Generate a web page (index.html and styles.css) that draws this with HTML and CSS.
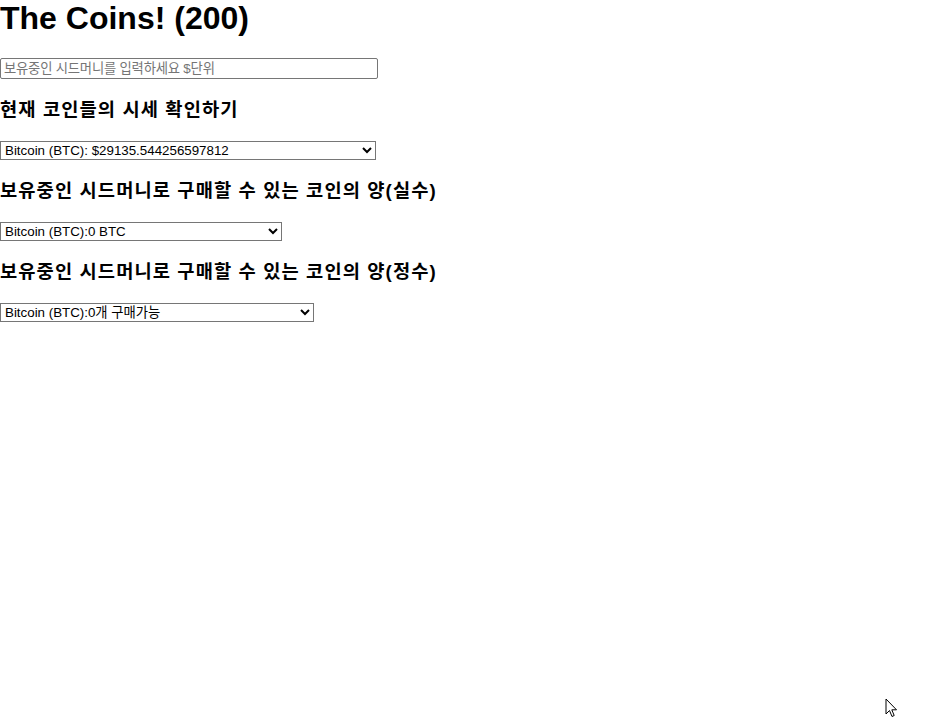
FILE: index.html
```html
<!DOCTYPE html>
<html lang="ko">
<head>
    <meta charset="UTF-8">
    <meta name="viewport" content="width=device-width, initial-scale=1.0">
    <title>The Coins!</title>
    <link rel="stylesheet" href="styles.css">
</head>
<body>

<h1 class="page-title">The Coins! (200)</h1>

<input class="money-input" type="text" placeholder="보유중인 시드머니를 입력하세요 $단위">

<h3 class="section-title">현재 코인들의 시세 확인하기</h3>
<select class="coin-select price-select">
    <option>Bitcoin (BTC): $29135.544256597812</option>
</select>

<h3 class="section-title">보유중인 시드머니로 구매할 수 있는 코인의 양(실수)</h3>
<select class="coin-select amount-select">
    <option>Bitcoin (BTC):0 BTC</option>
</select>

<h3 class="section-title">보유중인 시드머니로 구매할 수 있는 코인의 양(정수)</h3>
<select class="coin-select count-select">
    <option>Bitcoin (BTC):0개 구매가능</option>
</select>

<!-- mouse pointer left in the screenshot -->
<svg class="pointer" width="14" height="21" viewBox="0 0 14 21">
    <path d="M1 1 L1 16 L4.5 12.5 L7 18.5 L9.2 17.5 L6.8 11.8 L11.5 11.8 Z" fill="#fff" stroke="#000" stroke-width="1" stroke-linejoin="miter"/>
</svg>

</body>
</html>
```

FILE: styles.css
```css
body {
    font-family: "Liberation Sans", Arial, "Noto Sans CJK KR", sans-serif;
    margin: 0;
    padding: 0;
    color: #000;
    background-color: #fff;
}

.page-title {
    font-size: 32px;
    line-height: 37px;
    margin: 0 0 21px 0;
}

.money-input {
    display: block;
    box-sizing: border-box;
    width: 378px;
    height: 21px;
    margin: 0;
    padding: 1px 3px;
    font-family: "Liberation Sans", Arial, "Noto Sans CJK KR", sans-serif;
    font-size: 13.33px;
    border: 1px solid #767676;
    border-radius: 2px;
}

.money-input::placeholder {
    color: #757575;
    letter-spacing: -0.2px;
}

.section-title {
    font-size: 18.72px;
    line-height: 24px;
    letter-spacing: 1.1px;
    margin: 19px 0;
}

.coin-select {
    display: block;
    box-sizing: border-box;
    height: 19px;
    margin: 0;
    font-family: "Liberation Sans", Arial, "Noto Sans CJK KR", sans-serif;
    font-size: 13.33px;
    color: #000;
    background-color: #fff;
    border: 1px solid #767676;
    border-radius: 0;
}

.price-select {
    width: 376px;
}

.amount-select {
    width: 282px;
}

.count-select {
    width: 314px;
}

.pointer {
    position: fixed;
    left: 885px;
    top: 698px;
}
```
